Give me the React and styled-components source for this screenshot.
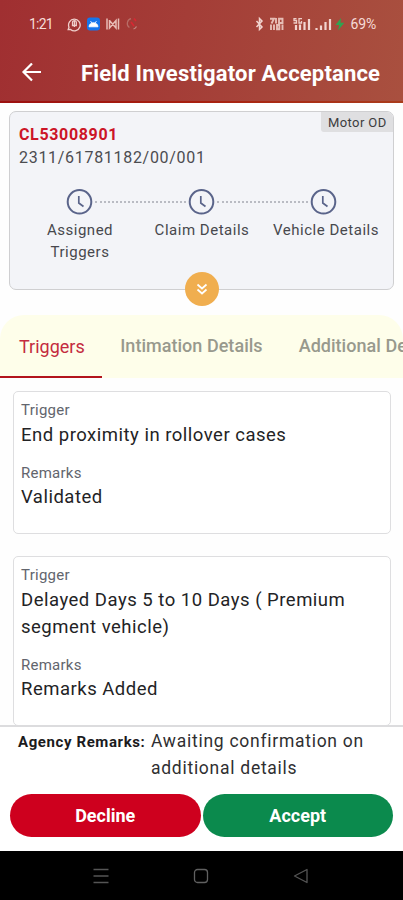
import React, { useState } from 'react';
import styled, { createGlobalStyle } from 'styled-components';

const GlobalStyle = createGlobalStyle`
  * {
    box-sizing: border-box;
  }
  body {
    margin: 0;
    font-family: Roboto, "Liberation Sans", sans-serif;
    background: #fff;
    overflow: hidden;
  }
`;

const Screen = styled.div`
  display: flex;
  flex-direction: column;
  height: 900px;
  width: 403px;
  overflow: hidden;
  background: #fefefe;
`;

const Header = styled.header`
  flex: none;
  height: 103px;
  background: linear-gradient(100deg, #a02f31 0%, #a43d37 45%, #a9503f 100%);
  border-bottom: 2px solid;
  border-image: linear-gradient(90deg, #9c100f, #a8200f 50%, #aa3c1c) 1;
  color: #fff;
`;

const StatusBar = styled.div`
  display: flex;
  justify-content: space-between;
  align-items: center;
  height: 48px;
  padding: 0 27px 0 29px;
  color: #f6dcd8;
`;

const StatusGroup = styled.div`
  display: flex;
  align-items: center;
`;

const Clock = styled.span`
  width: 38px;
  font-size: 14px;
  letter-spacing: -0.8px;
`;

const Battery = styled.span`
  margin-left: 4px;
  font-size: 14px;
  letter-spacing: -0.2px;
`;

const TitleRow = styled.div`
  display: flex;
  align-items: center;
  height: 49px;
  padding-left: 21px;
`;

const Title = styled.h1`
  margin: 1px 0 0 38px;
  font-size: 22px;
  font-weight: 700;
  letter-spacing: 0.18px;
  white-space: nowrap;
`;

const ClaimCard = styled.section`
  position: relative;
  flex: none;
  height: 179px;
  margin: 8px 9px 0 9px;
  border: 1px solid #cfcfd1;
  border-radius: 7px;
  background: #f3f4f8;
`;

const Badge = styled.span`
  position: absolute;
  top: 0;
  right: 0;
  width: 72px;
  height: 20px;
  padding-left: 7px;
  border-radius: 0 6px 0 3px;
  background: #dfdfe1;
  color: #3c3c3e;
  font-size: 13px;
  line-height: 21px;
  letter-spacing: 0.4px;
  white-space: nowrap;
`;

const ClaimNumber = styled.div`
  padding: 12px 0 0 9px;
  color: #cc1527;
  font-size: 16px;
  font-weight: 700;
  line-height: 22px;
  letter-spacing: 0.65px;
`;

const PolicyNumber = styled.div`
  padding-left: 9px;
  color: #4c4c50;
  font-size: 16px;
  line-height: 24px;
  letter-spacing: 0.7px;
`;

const Steps = styled.div`
  display: flex;
  align-items: center;
  margin: 18px 56px 0 56px;
`;

const DottedLine = styled.div`
  flex: 1;
  margin: 0 2px;
  border-top: 2px dotted #b9bbc3;
`;

const StepLabels = styled.div`
  display: grid;
  grid-template-columns: 122px 122px 126px;
  margin: 4px 0 0 9px;
`;

const StepLabel = styled.span`
  color: #47484d;
  font-size: 15px;
  line-height: 22px;
  letter-spacing: 0.52px;
  text-align: center;
`;

const ExpandButton = styled.button`
  position: absolute;
  left: 175px;
  bottom: -17px;
  display: flex;
  align-items: center;
  justify-content: center;
  width: 34px;
  height: 34px;
  padding: 0;
  border: 0;
  border-radius: 50%;
  background: #f0ae4f;
`;

const TabBar = styled.nav`
  display: flex;
  flex: none;
  height: 63px;
  margin-top: 25px;
  border-radius: 24px 24px 0 0;
  background: #fefeea;
  overflow: hidden;
`;

const Tab = styled.button`
  flex: none;
  padding: ${(props) => (props.$active ? '2px 17.5px 0 19px' : '0 18px')};
  border: 0;
  border-bottom: 2px solid ${(props) => (props.$active ? '#b3141c' : 'transparent')};
  background: none;
  color: ${(props) => (props.$active ? '#c42b40' : '#98998d')};
  font-family: inherit;
  font-size: 18px;
  font-weight: ${(props) => (props.$active ? 400 : 500)};
  letter-spacing: ${(props) => (props.$active ? 0 : '0.03px')};
  white-space: nowrap;
`;

const TriggerList = styled.main`
  display: flex;
  flex-direction: column;
  flex: 1;
  min-height: 0;
  gap: 22px;
  padding: 13px 12px 0 13px;
  overflow: hidden;
`;

const TriggerCard = styled.article`
  flex: none;
  padding: 8px 7px 21px;
  border: 1px solid #dedee0;
  border-radius: 5px;
  background: #fff;
`;

const Label = styled.div`
  margin-top: ${(props) => (props.$spaced ? '13px' : 0)};
  color: #62656d;
  font-size: 15px;
  line-height: 20px;
  letter-spacing: 0.25px;
`;

const Value = styled.div`
  padding: 1.5px 0 1px;
  color: #232325;
  font-size: 18.5px;
  line-height: 27px;
  letter-spacing: 0.5px;
`;

const Footer = styled.footer`
  flex: none;
  height: 126px;
  border-top: 2px solid #dcdcde;
  background: #fff;
`;

const AgencyRemarks = styled.div`
  display: flex;
  height: 67px;
  padding: 1px 18px 0;
`;

const AgencyLabel = styled.span`
  width: 133px;
  flex: none;
  color: #1b1b1d;
  font-size: 15px;
  font-weight: 700;
  line-height: 28px;
  letter-spacing: 0.6px;
  white-space: nowrap;
`;

const AgencyText = styled.span`
  width: 230px;
  color: #2f2f31;
  font-size: 17.5px;
  line-height: 27px;
  letter-spacing: 0.73px;
`;

const Actions = styled.div`
  display: flex;
  gap: 2px;
  padding: 0 10px;
`;

const ActionButton = styled.button`
  flex: 1;
  height: 43px;
  padding: 0;
  border: 0;
  border-radius: 22px;
  background: ${(props) => props.$color};
  color: #fff;
  font-family: inherit;
  font-size: 18px;
  font-weight: 700;
`;

const NavBar = styled.div`
  display: flex;
  flex: none;
  align-items: center;
  justify-content: center;
  gap: 84px;
  height: 49px;
  padding-right: 1px;
  background: #000;
`;

const BackArrow = () => (
  <svg width="22" height="20" viewBox="0 0 22 20" fill="none" stroke="#fff" strokeWidth="2.2">
    <path d="M20 9H3M11 0.5L2.5 9L11 17.5" />
  </svg>
);

const NotificationIcons = () => (
  <svg width="74" height="16" viewBox="0 0 74 16" fill="none">
    <path d="M3.6 13.4L1.2 13.6L2 11.2A5.8 5.8 0 1 1 3.6 13.4Z" stroke="#efcfcb" strokeWidth="1.3" />
    <path d="M5.5 6.2C5.5 4.2 9.3 4.2 9.3 6.2V9.5H5.5ZM7.4 4.5V11" stroke="#efcfcb" strokeWidth="1.3" />
    <rect x="20" y="1.5" width="13" height="13" rx="3" fill="#1675ec" />
    <path d="M22 10.8C22.3 5.3 30.7 5.3 31 10.8ZM23.5 5L24.8 7M29.5 5L28.2 7" fill="#fff" stroke="#fff" strokeWidth="0.8" />
    <path d="M40 2.5V13.5M51.5 2.5V13.5M42.5 4V12L49 4.5V12L42.5 4.5" stroke="#e8bcb7" strokeWidth="1.5" />
    <path d="M64 2.6A5 5 0 0 0 62.4 11.5" stroke="#b86d67" strokeWidth="1.2" />
    <path d="M66.5 13A5 5 0 0 0 69.5 10.5" stroke="#c48781" strokeWidth="1.2" />
    <path d="M64 6L67 10M67 2.5L69 5" stroke="#d92732" strokeWidth="1.6" />
  </svg>
);

const SystemIcons = () => (
  <svg width="92" height="16" viewBox="0 0 92 16" fill="none">
    <path d="M1.5 5L7 11L4.5 13.5V2.5L7 5L1.5 11" stroke="#f2d5d0" strokeWidth="1.5" />
    <path d="M15 2.8H19L16.5 7.5M21 2V7.5M24 2.8V7H27.5V2.8ZM16 8.5V14M19 8.5V14M22 9H24.3V13.3H22ZM27.5 8.5V14" stroke="#e6bdb5" strokeWidth="1.9" />
    <path d="M41.5 2.6H39V4.5H41.5V7H38.5M47 2.6H44V7H46.5V5" stroke="#efcec8" strokeWidth="1.3" />
    <path d="M41 9V14M45 8.5V14M49.5 6V14M54 3V14" stroke="#f2d5d0" strokeWidth="2.2" />
    <path d="M61.5 12V14M66 9.5V14M70.5 6V14M75 3V14" stroke="#f2d5d0" strokeWidth="2.2" />
    <path d="M86 2L80.5 9H84.3L83 14.5L89.3 6.8H85.5Z" fill="#2fa451" />
  </svg>
);

const ClockIcon = () => (
  <svg width="27" height="27" viewBox="0 0 27 27" fill="none" stroke="#5a648a">
    <circle cx="13.5" cy="13.8" r="11.8" strokeWidth="2" />
    <path d="M12.8 8V15L17.5 18.5" strokeWidth="1.7" />
  </svg>
);

const DoubleChevron = () => (
  <svg width="12" height="12" viewBox="0 0 12 12" fill="none" stroke="#fff" strokeWidth="1.7">
    <path d="M1.5 1.5L6 5.5L10.5 1.5M1.5 6.5L6 10.5L10.5 6.5" />
  </svg>
);

const MenuIcon = () => (
  <svg width="16" height="16" viewBox="0 0 16 16" stroke="#555" strokeWidth="1.3">
    <path d="M0.5 1.5H15.5M0.5 8H15.5M0.5 14.5H15.5" />
  </svg>
);

const HomeIcon = () => (
  <svg width="16" height="16" viewBox="0 0 16 16" fill="none" stroke="#606060" strokeWidth="1.3">
    <rect x="1.5" y="1.5" width="13" height="13" rx="3" />
  </svg>
);

const BackIcon = () => (
  <svg width="16" height="16" viewBox="0 0 16 16" fill="none" stroke="#555" strokeWidth="1.3" strokeLinejoin="round">
    <path d="M14 1.5V14.5L1.5 8Z" />
  </svg>
);

const tabs = ['Triggers', 'Intimation Details', 'Additional Details'];

const triggers = [
  { id: 1, trigger: 'End proximity in rollover cases', remarks: 'Validated' },
  { id: 2, trigger: 'Delayed Days 5 to 10 Days ( Premium segment vehicle)', remarks: 'Remarks Added' },
];

const App = () => {
  const [activeTab, setActiveTab] = useState('Triggers');

  return (
    <Screen>
      <GlobalStyle />
      <Header>
        <StatusBar>
          <StatusGroup>
            <Clock>1:21</Clock>
            <NotificationIcons />
          </StatusGroup>
          <StatusGroup>
            <SystemIcons />
            <Battery>69%</Battery>
          </StatusGroup>
        </StatusBar>
        <TitleRow>
          <BackArrow />
          <Title>Field Investigator Acceptance</Title>
        </TitleRow>
      </Header>

      <ClaimCard>
        <Badge>Motor OD</Badge>
        <ClaimNumber>CL53008901</ClaimNumber>
        <PolicyNumber>2311/61781182/00/001</PolicyNumber>
        <Steps>
          <ClockIcon />
          <DottedLine />
          <ClockIcon />
          <DottedLine />
          <ClockIcon />
        </Steps>
        <StepLabels>
          <StepLabel>Assigned Triggers</StepLabel>
          <StepLabel>Claim Details</StepLabel>
          <StepLabel>Vehicle Details</StepLabel>
        </StepLabels>
        <ExpandButton>
          <DoubleChevron />
        </ExpandButton>
      </ClaimCard>

      <TabBar>
        {tabs.map((tab) => (
          <Tab key={tab} $active={tab === activeTab} onClick={() => setActiveTab(tab)}>
            {tab}
          </Tab>
        ))}
      </TabBar>

      <TriggerList>
        {triggers.map((item) => (
          <TriggerCard key={item.id}>
            <Label>Trigger</Label>
            <Value>{item.trigger}</Value>
            <Label $spaced>Remarks</Label>
            <Value>{item.remarks}</Value>
          </TriggerCard>
        ))}
      </TriggerList>

      <Footer>
        <AgencyRemarks>
          <AgencyLabel>Agency Remarks:</AgencyLabel>
          <AgencyText>Awaiting confirmation on additional details</AgencyText>
        </AgencyRemarks>
        <Actions>
          <ActionButton $color="#ce001e">Decline</ActionButton>
          <ActionButton $color="#0b8a4d">Accept</ActionButton>
        </Actions>
      </Footer>

      <NavBar>
        <MenuIcon />
        <HomeIcon />
        <BackIcon />
      </NavBar>
    </Screen>
  );
};

export default App;
